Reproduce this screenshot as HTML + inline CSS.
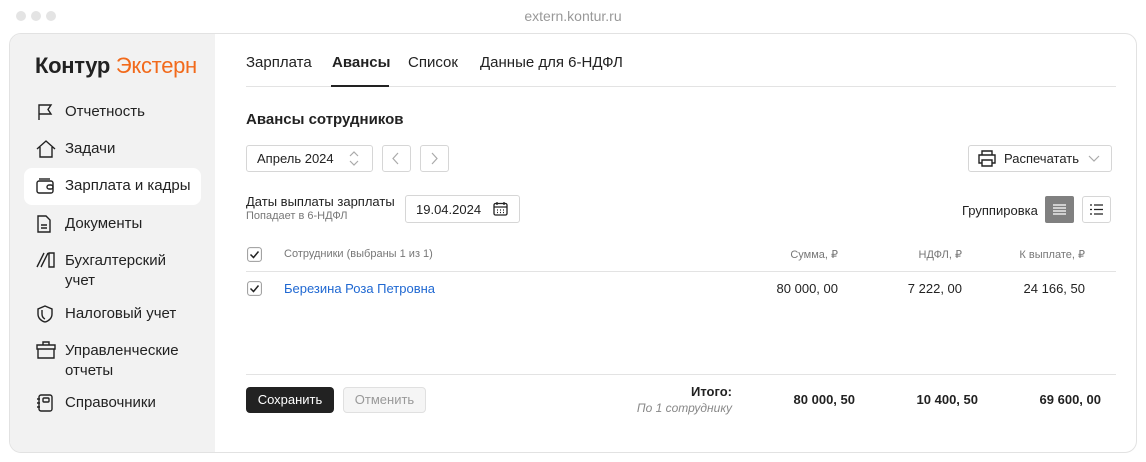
<!DOCTYPE html>
<html><head><meta charset="utf-8"><style>
*{margin:0;padding:0;box-sizing:border-box}
body{width:1146px;height:462px;background:#fff;font-family:"Liberation Sans",sans-serif;color:#222;position:relative;overflow:hidden}
.a{position:absolute}
.dot{width:10px;height:10px;border-radius:50%;background:#e4e4e4;top:11px}
.win{left:9px;top:33px;width:1128px;height:420px;border:1px solid #e2e2e2;border-radius:12px;overflow:hidden;background:#fff}
.side{left:0;top:0;width:205px;height:100%;background:#f2f2f2}
.nav{font-size:15px;color:#222;left:55px}
.ic{left:26px}
.t{white-space:nowrap}
.btn{border:1px solid #d6d6d6;border-radius:3px;background:#fff}
.r{text-align:right}
.g{color:#777}
</style></head><body>
<div class="a dot" style="left:16px"></div><div class="a dot" style="left:31px"></div><div class="a dot" style="left:46px"></div>
<div class="a t" style="left:0;width:1146px;top:8px;text-align:center;font-size:14px;color:#999">extern.kontur.ru</div>
<div class="a win">
 <div class="a side">
  <div class="a t" style="left:25px;top:19px;font-size:22px;letter-spacing:-0.3px"><span style="font-weight:600">Контур</span> <span style="color:#f26a1b">Экстерн</span></div>
  <div class="a" style="left:14px;top:134px;width:177px;height:37px;background:#fff;border-radius:8px"></div>
  <svg class="a ic" style="top:69px" width="18" height="18" viewBox="0 0 18 18" fill="none" stroke="#222" stroke-width="1.4"><path d="M3 17V2h12l-3 4.5 3 4.5H3"/></svg>
  <div class="a nav t" style="top:69px">Отчетность</div>
  <svg class="a ic" style="top:106px" width="20" height="18" viewBox="0 0 20 18" fill="none" stroke="#222" stroke-width="1.4"><path d="M1 9L10 1l9 8M4 7v10h12V7"/></svg>
  <div class="a nav t" style="top:106px">Задачи</div>
  <svg class="a ic" style="top:143px" width="18" height="18" viewBox="0 0 18 18" fill="none" stroke="#222" stroke-width="1.4"><rect x="1" y="4" width="16" height="12" rx="2"/><path d="M3 2h11"/><rect x="11" y="8" width="6" height="4" rx="2"/></svg>
  <div class="a nav t" style="top:143px">Зарплата и кадры</div>
  <svg class="a ic" style="top:181px" width="16" height="18" viewBox="0 0 16 18" fill="none" stroke="#222" stroke-width="1.4"><path d="M2 1h8l4 4v12H2zM5 10h6M5 13h6"/></svg>
  <div class="a nav t" style="top:181px">Документы</div>
  <svg class="a ic" style="top:217px" width="20" height="18" viewBox="0 0 20 18" fill="none" stroke="#222" stroke-width="1.4"><path d="M1 16L8 2M5 16L12 2M13 2h5v14h-5z"/></svg>
  <div class="a nav" style="top:217px;line-height:20px">Бухгалтерский<br>учет</div>
  <svg class="a ic" style="top:271px" width="18" height="18" viewBox="0 0 18 18" fill="none" stroke="#222" stroke-width="1.4"><path d="M9 1l7 3v5c0 4-3 7-7 8-4-1-7-4-7-8V4z"/><path d="M6 5v4c0 2 1 4 3 5"/></svg>
  <div class="a nav t" style="top:271px">Налоговый учет</div>
  <svg class="a ic" style="top:307px" width="20" height="18" viewBox="0 0 20 18" fill="none" stroke="#222" stroke-width="1.4"><path d="M7 4V1h6v3M1 4h18v4H1zM2 8v9h16V8"/></svg>
  <div class="a nav" style="top:307px;line-height:20px">Управленческие<br>отчеты</div>
  <svg class="a ic" style="top:360px" width="18" height="18" viewBox="0 0 18 18" fill="none" stroke="#222" stroke-width="1.4"><rect x="3" y="1" width="13" height="16" rx="2"/><rect x="7" y="4" width="6" height="4" rx="1"/><path d="M1 5h3M1 9h3M1 13h3"/></svg>
  <div class="a nav t" style="top:360px">Справочники</div>
 </div>
</div>
<div class="a t" style="left:246px;top:54px;font-size:15px">Зарплата</div>
<div class="a t" style="left:332px;top:54px;font-size:15px;font-weight:bold">Авансы</div>
<div class="a t" style="left:408px;top:54px;font-size:15px">Список</div>
<div class="a t" style="left:480px;top:54px;font-size:15px">Данные для 6-НДФЛ</div>
<div class="a" style="left:246px;top:86px;width:870px;height:1px;background:#e3e3e3"></div>
<div class="a" style="left:331px;top:85px;width:58px;height:2px;background:#222"></div>
<div class="a t" style="left:246px;top:111px;font-size:15px;font-weight:bold">Авансы сотрудников</div>
<div class="a btn" style="left:246px;top:145px;width:127px;height:27px"></div>
<div class="a t" style="left:257px;top:151px;font-size:13px">Апрель 2024</div>
<svg class="a" style="left:348px;top:150px" width="12" height="17" viewBox="0 0 12 17" fill="none" stroke="#aaa" stroke-width="1.2"><path d="M2 6l4-4 4 4M2 11l4 4 4-4"/></svg>
<div class="a btn" style="left:382px;top:145px;width:29px;height:27px"></div>
<svg class="a" style="left:392px;top:152px" width="8" height="13" fill="none" stroke="#aaa" stroke-width="1.2"><path d="M6 1L1 6.5 6 12"/></svg>
<div class="a btn" style="left:420px;top:145px;width:29px;height:27px"></div>
<svg class="a" style="left:431px;top:152px" width="8" height="13" fill="none" stroke="#aaa" stroke-width="1.2"><path d="M1 1l5 5.5L1 12"/></svg>
<div class="a btn" style="left:968px;top:145px;width:144px;height:27px"></div>
<svg class="a" style="left:978px;top:150px" width="18" height="17" viewBox="0 0 18 17" fill="none" stroke="#222" stroke-width="1.4"><path d="M4 5V1h10v4M4 13H1V5h16v8h-3M4 10h10v6H4z"/></svg>
<div class="a t" style="left:1004px;top:151px;font-size:13px">Распечатать</div>
<svg class="a" style="left:1088px;top:155px" width="12" height="7" fill="none" stroke="#aaa" stroke-width="1.2"><path d="M1 1l5 5 5-5"/></svg>
<div class="a t" style="left:246px;top:194px;font-size:13px">Даты выплаты зарплаты</div>
<div class="a t g" style="left:246px;top:210px;font-size:11px">Попадает в 6-НДФЛ</div>
<div class="a btn" style="left:405px;top:195px;width:115px;height:28px"></div>
<div class="a t" style="left:416px;top:202px;font-size:13px">19.04.2024</div>
<svg class="a" style="left:493px;top:201px" width="15" height="15" viewBox="0 0 15 15" fill="none" stroke="#222" stroke-width="1.3"><rect x="1" y="2.5" width="13" height="11.5" rx="1.5"/><path d="M4 1v3M11 1v3M1 6h13"/><path d="M4 9h1M7 9h1M10 9h1M4 11.5h1M7 11.5h1M10 11.5h1" stroke-width="1.2"/></svg>
<div class="a t" style="left:962px;top:203px;font-size:13px">Группировка</div>
<div class="a" style="left:1045px;top:196px;width:29px;height:27px;background:#808080;border-radius:2px"></div>
<svg class="a" style="left:1052px;top:203px" width="15" height="13" stroke="#fff" stroke-width="1.2"><path d="M1 2h13M1 5h13M1 8h13M1 11h13"/></svg>
<div class="a btn" style="left:1082px;top:196px;width:29px;height:27px"></div>
<svg class="a" style="left:1089px;top:203px" width="15" height="13" stroke="#222" stroke-width="1.2"><path d="M1 2h2M1 6.5h2M1 11h2M5 2h9M5 6.5h9M5 11h9"/></svg>
<svg class="a" style="left:247px;top:247px" width="15" height="15" fill="none"><rect x="0.6" y="0.6" width="13.8" height="13.8" rx="2.5" stroke="#999"/><path d="M3.5 7.5l3 3 5-6" stroke="#222" stroke-width="1.5"/></svg>
<div class="a t g" style="left:284px;top:248px;font-size:11px">Сотрудники (выбраны 1 из 1)</div>
<div class="a t g r" style="left:738px;width:100px;top:248px;font-size:11px">Сумма, ₽</div>
<div class="a t g r" style="left:862px;width:100px;top:248px;font-size:11px">НДФЛ, ₽</div>
<div class="a t g r" style="left:985px;width:100px;top:248px;font-size:11px">К выплате, ₽</div>
<div class="a" style="left:246px;top:271px;width:870px;height:1px;background:#e3e3e3"></div>
<svg class="a" style="left:247px;top:281px" width="15" height="15" fill="none"><rect x="0.6" y="0.6" width="13.8" height="13.8" rx="2.5" stroke="#999"/><path d="M3.5 7.5l3 3 5-6" stroke="#222" stroke-width="1.5"/></svg>
<div class="a t" style="left:284px;top:281px;font-size:13px;color:#1f68d2">Березина Роза Петровна</div>
<div class="a t r" style="left:738px;width:100px;top:281px;font-size:13px">80 000, 00</div>
<div class="a t r" style="left:862px;width:100px;top:281px;font-size:13px">7 222, 00</div>
<div class="a t r" style="left:985px;width:100px;top:281px;font-size:13px">24 166, 50</div>
<div class="a" style="left:246px;top:374px;width:870px;height:1px;background:#e3e3e3"></div>
<div class="a" style="left:246px;top:387px;width:88px;height:26px;background:#222;border-radius:4px"></div>
<div class="a t" style="left:246px;width:88px;text-align:center;top:392px;font-size:13px;color:#fff">Сохранить</div>
<div class="a" style="left:343px;top:387px;width:83px;height:26px;background:#f5f5f5;border:1px solid #e0e0e0;border-radius:4px"></div>
<div class="a t" style="left:343px;width:83px;text-align:center;top:392px;font-size:13px;color:#999">Отменить</div>
<div class="a t r" style="left:600px;width:132px;top:384px;font-size:13px;font-weight:600">Итого:</div>
<div class="a t r" style="left:600px;width:132px;top:401px;font-size:12px;font-style:italic;color:#888">По 1 сотруднику</div>
<div class="a t r" style="left:735px;width:120px;top:392px;font-size:13px;font-weight:600">80 000, 50</div>
<div class="a t r" style="left:858px;width:120px;top:392px;font-size:13px;font-weight:600">10 400, 50</div>
<div class="a t r" style="left:981px;width:120px;top:392px;font-size:13px;font-weight:600">69 600, 00</div>
</body></html>
